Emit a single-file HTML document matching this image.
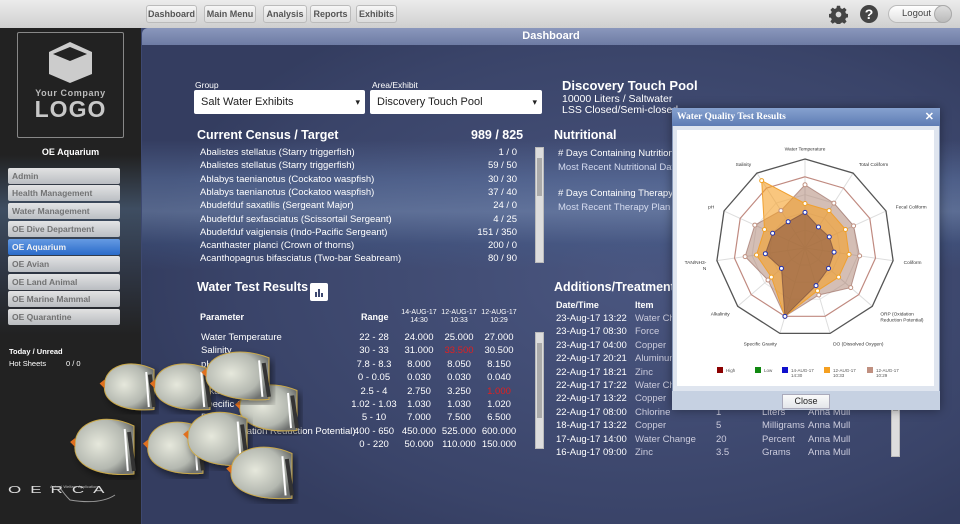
<!DOCTYPE html>
<html><head><meta charset="utf-8"><style>
*{margin:0;padding:0;box-sizing:border-box}
body{width:960px;height:524px;overflow:hidden;font-family:"Liberation Sans",sans-serif;background:#3d4870;position:relative}
.a{position:absolute;white-space:nowrap}
#top{left:0;top:0;width:960px;height:28px;background:linear-gradient(#ececec,#cfcfcf)}
.tb{position:absolute;top:5px;height:18px;border:1px solid #bbb;border-radius:3px;background:linear-gradient(#f6f6f6,#dcdcdc);font-size:9px;font-weight:bold;color:#555;text-align:center;line-height:16px}
#side{left:0;top:28px;width:141px;height:496px;background:#222}
#main{left:142px;top:28px;width:818px;height:496px;background:radial-gradient(ellipse 500px 300px at 500px 250px,#4a5680,#3a4469 80%,#343d60);border-top-left-radius:6px}
#wave{left:142px;top:140px;width:818px;height:130px;background:linear-gradient(180deg,rgba(120,150,200,0) 0%,rgba(110,140,190,.35) 30%,rgba(150,180,220,.35) 55%,rgba(70,100,150,.25) 80%,rgba(60,80,130,0) 100%)}
#hdr{left:142px;top:28px;width:818px;height:17px;background:linear-gradient(#8a97bc,#6e7ca4);border-top-left-radius:6px;color:#fff;font-weight:bold;font-size:11px;text-align:center;line-height:17px}
.mb{position:absolute;left:8px;width:112px;height:16px;background:linear-gradient(#f0f0f0,#c5c8cc);border-radius:2px;font-size:8.5px;font-weight:bold;color:#777;padding-left:4px;line-height:16px;opacity:.93}
.w{color:#fff;font-size:9px}
.sel{position:absolute;height:24px;background:#fff;border-radius:2px;font-size:11px;color:#222;padding-left:7px;line-height:24px}
.sel:after{content:"▾";position:absolute;right:5px;font-size:9px;color:#222}
.h{color:#fff;font-weight:bold;font-size:12.5px}
.r{font-size:9.5px;color:#fff}
.sb{position:absolute;width:9px;background:#ddd;border:1px solid #bbb}
.sb i{position:absolute;left:1px;right:1px;background:#aaa}
</style></head><body>
<div class="a" id="top"></div>
<div class="tb" style="left:146px;width:51px">Dashboard</div>
<div class="tb" style="left:204px;width:52px">Main Menu</div>
<div class="tb" style="left:263px;width:44px">Analysis</div>
<div class="tb" style="left:310px;width:41px">Reports</div>
<div class="tb" style="left:356px;width:41px">Exhibits</div>
<svg class="a" style="left:829px;top:5px" width="19" height="19" viewBox="0 0 24 24"><path fill="#444" d="M10 1h4l.6 3 2.2 1 2.6-1.7 2.8 2.8-1.7 2.6 1 2.2 3 .6v4l-3 .6-1 2.2 1.7 2.6-2.8 2.8-2.6-1.7-2.2 1-.6 3h-4l-.6-3-2.2-1-2.6 1.7-2.8-2.8 1.7-2.6-1-2.2-3-.6v-4l3-.6 1-2.2-1.7-2.6 2.8-2.8 2.6 1.7 2.2-1z"/><circle cx="12" cy="12" r="3.6" fill="#d8d8d8"/></svg>
<div class="a" style="left:860px;top:5px;width:18px;height:18px;border-radius:50%;background:#444;color:#fff;font-weight:bold;font-size:14px;text-align:center;line-height:18px">?</div>
<div class="a" style="left:888px;top:5px;width:64px;height:18px;border-radius:9px;border:1px solid #bbb;background:linear-gradient(#fff,#e2e2e2);font-size:9.5px;color:#444;padding-left:13px;line-height:16px">Logout</div>
<div class="a" style="left:934px;top:5px;width:18px;height:18px;border-radius:50%;background:linear-gradient(#ddd,#bbb);border:1px solid #aaa"></div>

<div class="a" id="side"></div>
<div class="a" style="left:0;top:155px;width:141px;height:180px;background:linear-gradient(180deg,rgba(60,80,110,0),rgba(90,120,160,.5) 30%,rgba(70,90,130,.4) 60%,rgba(34,34,34,0))"></div>
<div class="a" style="left:17px;top:32px;width:107px;height:106px;border:1px solid #888;border-radius:2px"></div>
<svg class="a" style="left:47px;top:40px" width="47" height="44" viewBox="0 0 47 44"><path fill="#ccc" d="M23 2 45 12v22L23 43 2 34V12z"/><path fill="#222" d="M23 7 40 14 23 21 6 14z"/></svg>
<div class="a" style="left:17px;top:88px;width:107px;text-align:center;color:#bbb;font-weight:bold;font-size:9px;letter-spacing:.6px">Your Company</div>
<div class="a" style="left:17px;top:96px;width:107px;text-align:center;color:#c8c8c8;font-weight:bold;font-size:23px;letter-spacing:1px">LOGO</div>
<div class="a" style="left:0;top:147px;width:141px;text-align:center;color:#fff;font-weight:bold;font-size:9px">OE Aquarium</div>
<div class="mb" style="top:168px">Admin</div>
<div class="mb" style="top:185px">Health Management</div>
<div class="mb" style="top:203px">Water Management</div>
<div class="mb" style="top:221px">OE Dive Department</div>
<div class="mb" style="top:239px;background:linear-gradient(#6aa2ee,#2a6fd4);color:#fff">OE Aquarium</div>
<div class="mb" style="top:256px">OE Avian</div>
<div class="mb" style="top:274px">OE Land Animal</div>
<div class="mb" style="top:291px">OE Marine Mammal</div>
<div class="mb" style="top:309px">OE Quarantine</div>
<div class="a" style="left:9px;top:347px;color:#fff;font-size:7.5px;font-weight:bold">Today / Unread</div>
<div class="a" style="left:9px;top:359px;color:#fff;font-size:7.5px">Hot Sheets</div>
<div class="a" style="left:66px;top:359px;color:#fff;font-size:7.5px">0 / 0</div>

<div class="a" id="main"></div>
<div class="a" id="wave"></div>
<div class="a" id="hdr">Dashboard</div>

<div class="a w" style="left:195px;top:80px;font-size:8.5px">Group</div>
<div class="a w" style="left:372px;top:80px;font-size:8.5px">Area/Exhibit</div>
<div class="sel" style="left:194px;top:90px;width:171px">Salt Water Exhibits</div>
<div class="sel" style="left:370px;top:90px;width:172px">Discovery Touch Pool</div>
<div class="a h" style="left:562px;top:78px;font-size:13px">Discovery Touch Pool</div>
<div class="a" style="left:562px;top:93px;color:#fff;font-size:10.5px">10000 Liters / Saltwater</div>
<div class="a" style="left:562px;top:104px;color:#fff;font-size:10.5px">LSS Closed/Semi-closed</div>

<div class="a h" style="left:197px;top:128px">Current Census / Target</div>
<div class="a h" style="left:471px;top:128px">989 / 825</div>
<div class="sb" style="left:535px;top:147px;height:116px"><i style="top:10px;height:38px"></i></div>

<div class="a h" style="left:554px;top:128px">Nutritional</div>
<div class="a r" style="left:558px;top:148px">#&nbsp;Days Containing Nutritional</div>
<div class="a r" style="left:558px;top:162px;color:#d6dcf0">Most Recent Nutritional Data</div>
<div class="a r" style="left:558px;top:188px">#&nbsp;Days Containing Therapy Pl</div>
<div class="a r" style="left:558px;top:202px;color:#d6dcf0">Most Recent Therapy Plan Ad</div>

<div class="a h" style="left:197px;top:280px">Water Test Results</div>
<div class="a" style="left:310px;top:283px;width:18px;height:18px;background:#fff;border-radius:2px"><svg width="18" height="18"><path fill="#3d4870" d="M5 9h2v5H5zM8 6h2v8H8zM11 10h2v4h-2z"/></svg></div>
<div class="a" style="left:200px;top:312px;color:#fff;font-size:9px;font-weight:bold">Parameter</div>
<div class="a" style="left:361px;top:312px;color:#fff;font-size:9px;font-weight:bold">Range</div>
<div class="a" style="left:398px;top:309px;width:42px;text-align:center;color:#fff;font-size:7px;line-height:8px">14-AUG-17<br>14:30</div>
<div class="a" style="left:438px;top:309px;width:42px;text-align:center;color:#fff;font-size:7px;line-height:8px">12-AUG-17<br>10:33</div>
<div class="a" style="left:478px;top:309px;width:42px;text-align:center;color:#fff;font-size:7px;line-height:8px">12-AUG-17<br>10:29</div>
<div class="sb" style="left:535px;top:332px;height:117px"><i style="top:10px;height:75px"></i></div>

<div class="a h" style="left:554px;top:280px">Additions/Treatments</div>
<div class="a" style="left:556px;top:300px;color:#fff;font-size:9px;font-weight:bold">Date/Time</div>
<div class="a" style="left:635px;top:300px;color:#fff;font-size:9px;font-weight:bold">Item</div>
<div class="sb" style="left:891px;top:395px;height:62px"><i style="top:5px;height:10px"></i></div>

<svg class="a" style="left:60px;top:340px" width="250" height="180" viewBox="60 340 250 180" id="fish">
<defs><radialGradient id="fg" cx=".4" cy=".45" r=".65"><stop offset="0" stop-color="#e6e8dc"/><stop offset=".7" stop-color="#b4b8b0"/><stop offset="1" stop-color="#6f7270"/></radialGradient>
<filter id="sh"><feDropShadow dx="3" dy="4" stdDeviation="4" flood-color="#000" flood-opacity=".5"/></filter></defs>
</svg>
<div class="a" style="left:8px;top:480px;color:#ddd;font-size:17px;letter-spacing:9px;font-weight:300;transform:scaleY(.6)">OERCA</div>
<div class="a" style="left:50px;top:484px;color:#bbb;font-size:4px">Animal Welfare Application</div>

<div class="a" style="left:672px;top:108px;width:268px;height:302px;background:#dfe5ef;border:1px solid #8a9bbb;box-shadow:0 0 10px rgba(0,0,0,.4)"></div>
<div class="a" style="left:672px;top:108px;width:268px;height:18px;background:linear-gradient(#86a1cf,#5e7cb4);color:#fff;font-family:'Liberation Serif',serif;font-weight:bold;font-size:9.5px;line-height:18px;padding-left:5px">Water Quality Test Results<span style="position:absolute;right:6px;font-family:'Liberation Sans';font-size:11px">✕</span></div>
<div class="a" style="left:672px;top:391px;width:268px;height:19px;background:#c6d1e2"></div>
<div class="a" style="left:782px;top:394px;width:48px;height:15px;background:linear-gradient(#fafafa,#e3e6ea);border:1px solid #aab;font-size:9px;text-align:center;line-height:13px;color:#222">Close</div>
<svg class="a" style="left:677px;top:130px" width="257" height="256" id="radar"></svg>

<script>
function t(p,x,y,s,st){var d=document.createElement('div');d.className='a';d.style.cssText='left:'+x+'px;top:'+y+'px;font-size:'+(s||9.5)+'px;color:#fff;'+(st||'');d.textContent=p;document.body.insertBefore(d,document.getElementById('fish'));}
var cn=[["Abalistes stellatus (Starry triggerfish)","1 / 0"],["Abalistes stellatus (Starry triggerfish)","59 / 50"],["Ablabys taenianotus (Cockatoo waspfish)","30 / 30"],["Ablabys taenianotus (Cockatoo waspfish)","37 / 40"],["Abudefduf saxatilis (Sergeant Major)","24 / 0"],["Abudefduf sexfasciatus (Scissortail Sergeant)","4 / 25"],["Abudefduf vaigiensis (Indo-Pacific Sergeant)","151 / 350"],["Acanthaster planci (Crown of thorns)","200 / 0"],["Acanthopagrus bifasciatus (Two-bar Seabream)","80 / 90"]];
cn.forEach(function(r,i){var y=147+i*13.3;t(r[0],200,y);t(r[1],440,y,9.5,'width:77px;text-align:right');});
var wt=[["Water Temperature","22 - 28","24.000","25.000","27.000"],["Salinity","30 - 33","31.000","33.500","30.500"],["pH","7.8 - 8.3","8.000","8.050","8.150"],["Ammonia","0 - 0.05","0.030","0.030","0.040"],["Alkalinity","2.5 - 4","2.750","3.250","1.000"],["Specific Gravity","1.02 - 1.03","1.030","1.030","1.020"],["Dissolved Oxygen","5 - 10","7.000","7.500","6.500"],["ORP (Oxidation Reduction Potential)","400 - 650","450.000","525.000","600.000"],["Coliform","0 - 220","50.000","110.000","150.000"]];
wt.forEach(function(r,i){var y=332+i*13.4;t(r[0],201,y);t(r[1],346,y,9.5,'width:56px;text-align:center');
[r[2],r[3],r[4]].forEach(function(v,j){var red=(i==1&&j==1)||(i==4&&j==2);t(v,398+j*40,y,9.5,'width:42px;text-align:center;'+(red?'color:#e02020':''));});});
var ad=[["23-Aug-17 13:22","Water Cha"],["23-Aug-17 08:30","Force"],["23-Aug-17 04:00","Copper"],["22-Aug-17 20:21","Aluminum"],["22-Aug-17 18:21","Zinc"],["22-Aug-17 17:22","Water Cha"],["22-Aug-17 13:22","Copper"],["22-Aug-17 08:00","Chlorine","1","Liters","Anna Mull"],["18-Aug-17 13:22","Copper","5","Milligrams","Anna Mull"],["17-Aug-17 14:00","Water Change","20","Percent","Anna Mull"],["16-Aug-17 09:00","Zinc","3.5","Grams","Anna Mull"]];
ad.forEach(function(r,i){var y=313+i*13.4;t(r[0],556,y);t(r[1],635,y,9.5,'color:#ccd');if(r[2]){t(r[2],716,y,9.5,'color:#ccd');t(r[3],762,y,9.5,'color:#ccd');t(r[4],808,y,9.5,'color:#ccd');}});
var fs=[[72,417,62,60],[102,362,52,50],[145,420,58,56],[152,362,58,50],[237,383,60,50],[185,410,62,58],[203,350,66,52],[228,445,64,56]];
var f=document.getElementById('fish'),h='';
fs.forEach(function(a){var x=a[0],y=a[1],w=a[2],g=a[3];
h+='<g filter="url(#sh)"><path d="M'+(x+w)+' '+(y+g*.15)+' C'+(x+w*.5)+' '+(y-g*.1)+' '+(x+w*.05)+' '+(y+g*.1)+' '+(x+w*.05)+' '+(y+g*.45)+' C'+x+' '+(y+g*.8)+' '+(x+w*.4)+' '+(y+g)+' '+(x+w)+' '+(y+g*.95)+'Z" fill="url(#fg)" stroke="#c9a84a" stroke-width="1"/></g>';
h+='<path d="M'+(x+w*.85)+' '+(y+g*.2)+'L'+(x+w*.9)+' '+(y+g*.9)+'" stroke="#fff" stroke-width="2"/><path d="M'+(x+w*.92)+' '+(y+g*.25)+'L'+(x+w)+' '+(y+g*.9)+'" stroke="#333" stroke-width="4"/>';
h+='<path d="M'+(x+w*.05)+' '+(y+g*.35)+'l-5 4 5 5z" fill="#e07020"/>';});
h+='<path d="M20 490 Q40 470 55 460 Q50 480 70 500 Q100 505 115 495" fill="none" stroke="#999" stroke-width="1"/>';
f.innerHTML+=h;
var cx=128,cy=118,R=89,n=11,s=document.getElementById('radar'),o='<rect width="257" height="256" fill="#fff"/>';
function P(fr){var q=[];for(var i=0;i<n;i++){var a=i*2*Math.PI/n;q.push([cx+R*fr[i]*Math.sin(a),cy-R*fr[i]*Math.cos(a)]);}return q;}
function poly(q,fill,stroke,sw){return '<polygon points="'+q.map(function(p){return p[0].toFixed(1)+','+p[1].toFixed(1)}).join(' ')+'" fill="'+fill+'" stroke="'+stroke+'" stroke-width="'+(sw||1)+'"/>';}
function c(v){var a=[];for(var i=0;i<n;i++)a.push(v);return a;}
[.2,.4,.6].forEach(function(v){o+=poly(P(c(v)),'none','#e6e6e6');});
P(c(1)).forEach(function(p){o+='<line x1="'+cx+'" y1="'+cy+'" x2="'+p[0]+'" y2="'+p[1]+'" stroke="#ddd"/>';});
o+=poly(P(c(.8)),'none','#c08a80',1.2);
o+=poly(P(c(1)),'none','#555',1.3);
var br=[.71,.6,.6,.62,.68,.55,.8,.55,.68,.62,.5],or=[.5,.5,.5,.5,.5,.5,.8,.5,.55,.5,.9],bl=[.4,.28,.3,.33,.35,.44,.8,.35,.45,.4,.35];
o+=poly(P(br),'rgba(160,110,90,.45)','rgba(150,100,90,.6)');
o+=poly(P(or),'rgba(245,160,40,.6)','#f0a030');
o+=poly(P(bl),'rgba(130,80,60,.55)','rgba(110,70,60,.6)');
P(br).forEach(function(p){o+='<circle cx="'+p[0]+'" cy="'+p[1]+'" r="2" fill="#fff" stroke="#c09080"/>';});
P(or).forEach(function(p){o+='<circle cx="'+p[0]+'" cy="'+p[1]+'" r="2" fill="#fff" stroke="#f0a020"/>';});
P(bl).forEach(function(p){o+='<circle cx="'+p[0]+'" cy="'+p[1]+'" r="2" fill="#fff" stroke="#2030b0"/>';});
var lb=["Water Temperature","Total Coliform","Fecal Coliform","Coliform","ORP (Oxidation","DO (Dissolved Oxygen)","Specific Gravity","Alkalinity","TAN/NH3-","pH","Salinity"];
var lp=P(c(1.12));
lp.forEach(function(p,i){var anc=p[0]>cx+5?'start':(p[0]<cx-5?'end':'middle');o+='<text x="'+p[0]+'" y="'+(p[1]+2)+'" font-size="4.8" fill="#333" text-anchor="'+anc+'" font-family="Liberation Sans">'+lb[i]+'</text>';});
o+='<text x="'+lp[4][0]+'" y="'+(lp[4][1]+8)+'" font-size="4.8" fill="#333">Reduction Potential)</text><text x="'+lp[8][0]+'" y="'+(lp[8][1]+8)+'" font-size="4.8" fill="#333" text-anchor="end">N</text>';
var lg=[["#8b0000","High",40],["#118811","Low",78],["#1010cc","14-AUG-17",105],["#f5a020","12-AUG-17",147],["#c09080","12-AUG-17",190]];
lg.forEach(function(l){o+='<rect x="'+l[2]+'" y="237" width="6" height="6" fill="'+l[0]+'"/><text x="'+(l[2]+9)+'" y="242" font-size="4.5" fill="#555">'+l[1]+'</text>';});
o+='<text x="114" y="247" font-size="4.5" fill="#555">14:30</text><text x="156" y="247" font-size="4.5" fill="#555">10:33</text><text x="199" y="247" font-size="4.5" fill="#555">10:29</text>';
s.innerHTML=o;
</script>
</body></html>
